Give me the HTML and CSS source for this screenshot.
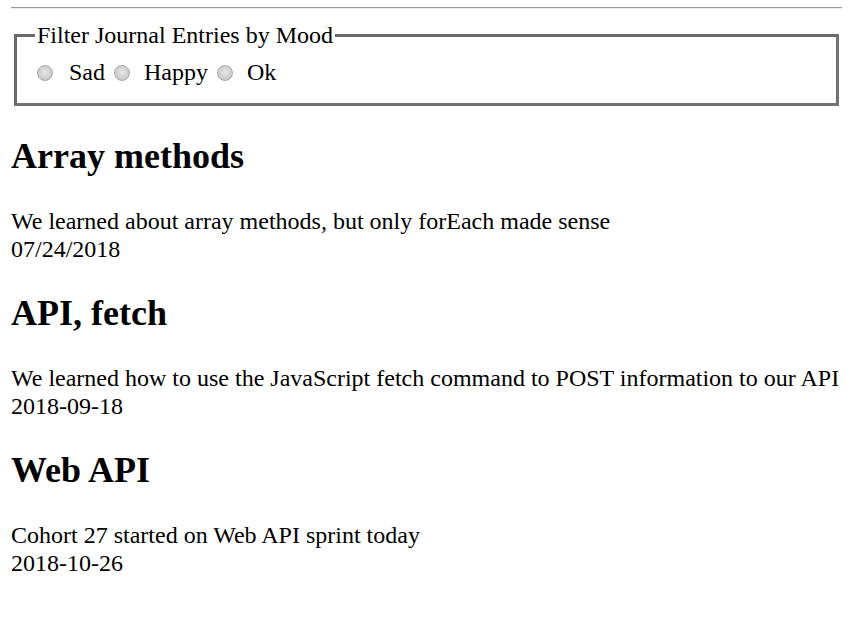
FILE: index.html
```html
<!DOCTYPE html>
<html>
<head>
<meta charset="utf-8">
<title>Journal</title>
<link rel="stylesheet" href="styles.css">
</head>
<body>
<hr class="rule">
<fieldset class="filter">
  <legend class="filter-legend">Filter Journal Entries by Mood</legend>
  <label class="mood"><input type="radio" name="mood" class="radio"> Sad</label>
  <label class="mood"><input type="radio" name="mood" class="radio"> Happy</label>
  <label class="mood"><input type="radio" name="mood" class="radio"> Ok</label>
</fieldset>
<article class="entry">
  <h2 class="entry-title">Array methods</h2>
  <p class="entry-body">We learned about array methods, but only forEach made sense<br>07/24/2018</p>
</article>
<article class="entry">
  <h2 class="entry-title">API, fetch</h2>
  <p class="entry-body">We learned how to use the JavaScript fetch command to POST information to our API<br>2018-09-18</p>
</article>
<article class="entry">
  <h2 class="entry-title">Web API</h2>
  <p class="entry-body">Cohort 27 started on Web API sprint today<br>2018-10-26</p>
</article>
</body>
</html>
```
FILE: styles.css
```css
html, body {
  background: #fff;
}
body {
  margin: 0 11px 0 11px;
  padding-top: 7px;
  font-family: "Liberation Serif", "Times New Roman", serif;
  font-size: 24px;
  color: #000;
}
.rule {
  margin: 0;
  height: 0;
  border: 0;
  border-top: 1px solid #9a9a9a;
  border-bottom: 1px solid #ececec;
}
.filter {
  margin: 13px 3px 0 3px;
  padding: 10px 18px 17px 18px;
  border: 3px solid #727272;
  border-top-color: #6a6a6a;
  border-left-color: #6a6a6a;
}
.filter-legend {
  padding: 0 2px;
  font-size: 24px;
}
.mood {
  font-size: 24px;
}
.radio {
  appearance: none;
  -webkit-appearance: none;
  width: 16px;
  height: 16px;
  margin: 0 8px 0 3px;
  border-radius: 50%;
  border: 1px solid #a9a9a9;
  background: radial-gradient(circle at 50% 45%, #e6e6e6 0%, #d0d0d0 55%, #bdbdbd 100%);
  vertical-align: -1px;
  box-sizing: border-box;
}
.mood:first-of-type .radio {
  margin-left: 2px;
  margin-right: 10px;
}
.entry-title {
  font-size: 36px;
  font-weight: bold;
  margin: 29px 0 30px;
}
.entry-body {
  margin: 0;
  line-height: 28px;
}
```
